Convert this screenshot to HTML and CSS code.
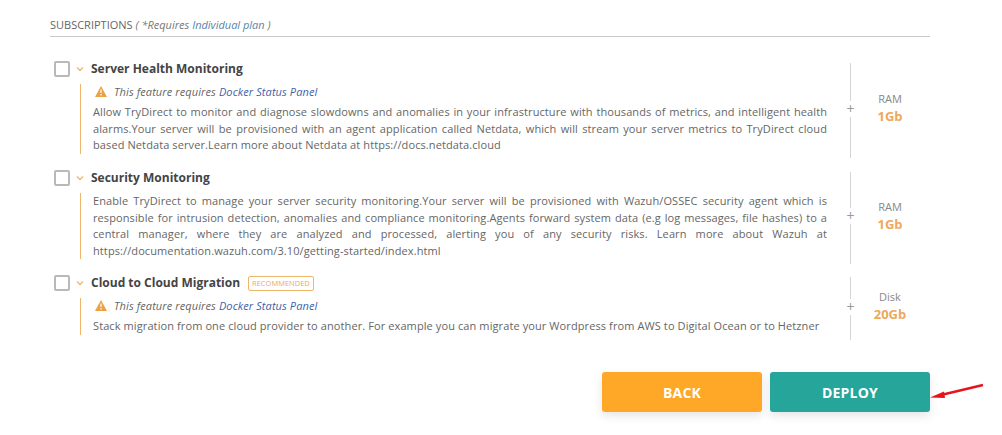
FILE: index.html
```html
<!DOCTYPE html>
<html lang="en">
<head>
<meta charset="utf-8">
<title>Subscriptions</title>
<link rel="stylesheet" href="styles.css">
</head>
<body>
<main class="page">
  <h2 class="section-head">SUBSCRIPTIONS <em>( *Requires <a href="#">Individual plan</a> )</em></h2>

  <section class="item item-1">
    <div class="main">
      <div class="title-row">
        <span class="check"></span>
        <svg class="chev" width="8" height="6" viewBox="0 0 8 6"><path d="M1 1.5 4 4.500 7 1.500" fill="none" stroke="#eeb66c" stroke-width="1.3"/></svg>
        <h3>Server Health Monitoring</h3>
      </div>
      <div class="body">
        <p class="warn"><svg width="12" height="11" viewBox="0 0 12 11"><path d="M6 0 12 11H0Z" fill="#eda145"/><path d="M6 3.6V7M6 8V9.4" stroke="#fff" stroke-width="1.2"/></svg><em>This feature requires <a href="#">Docker Status Panel</a></em></p>
        <p class="desc">Allow TryDirect to monitor and diagnose slowdowns and anomalies in your infrastructure with thousands of metrics, and intelligent health alarms.Your server will be provisioned with an agent application called Netdata, which will stream your server metrics to TryDirect cloud based Netdata server.Learn more about Netdata at https://docs.netdata.cloud</p>
      </div>
    </div>
    <aside class="side"><span class="plus">+</span><div class="res"><span>RAM</span><strong>1Gb</strong></div></aside>
  </section>

  <section class="item item-2">
    <div class="main">
      <div class="title-row">
        <span class="check"></span>
        <svg class="chev" width="8" height="6" viewBox="0 0 8 6"><path d="M1 1.5 4 4.500 7 1.500" fill="none" stroke="#eeb66c" stroke-width="1.3"/></svg>
        <h3>Security Monitoring</h3>
      </div>
      <div class="body">
        <p class="desc">Enable TryDirect to manage your server security monitoring.Your server will be provisioned with Wazuh/OSSEC security agent which is responsible for intrusion detection, anomalies and compliance monitoring.Agents forward system data (e.g log messages, file hashes) to a central manager, where they are analyzed and processed, alerting you of any security risks. Learn more about Wazuh at https://documentation.wazuh.com/3.10/getting-started/index.html</p>
      </div>
    </div>
    <aside class="side"><span class="plus">+</span><div class="res"><span>RAM</span><strong>1Gb</strong></div></aside>
  </section>

  <section class="item item-3">
    <div class="main">
      <div class="title-row">
        <span class="check"></span>
        <svg class="chev" width="8" height="6" viewBox="0 0 8 6"><path d="M1 1.5 4 4.500 7 1.500" fill="none" stroke="#eeb66c" stroke-width="1.3"/></svg>
        <h3>Cloud to Cloud Migration</h3>
        <span class="badge">RECOMMENDED</span>
      </div>
      <div class="body">
        <p class="warn"><svg width="12" height="11" viewBox="0 0 12 11"><path d="M6 0 12 11H0Z" fill="#eda145"/><path d="M6 3.6V7M6 8V9.4" stroke="#fff" stroke-width="1.2"/></svg><em>This feature requires <a href="#">Docker Status Panel</a></em></p>
        <p class="desc">Stack migration from one cloud provider to another. For example you can migrate your Wordpress from AWS to Digital Ocean or to Hetzner</p>
      </div>
    </div>
    <aside class="side"><span class="plus">+</span><div class="res"><span>Disk</span><strong>20Gb</strong></div></aside>
  </section>

  <div class="actions">
    <button class="btn back" type="button">BACK</button>
    <button class="btn deploy" type="button">DEPLOY
      <svg class="arrow" width="54" height="24" viewBox="0 0 54 24"><path d="M53 3 11 13" stroke="#e8141c" stroke-width="2.4" fill="none"/><path d="M0 15.500 14 9.500 15 16Z" fill="#e8141c"/></svg>
    </button>
  </div>
</main>
</body>
</html>
```
FILE: styles.css
```css
* { box-sizing: border-box; }
html, body { margin: 0; background: #fff; }
body { font-family: "Open Sans", sans-serif; color: #666; height: 435px; overflow: hidden; }
.page { width: 880px; margin-left: 50px; padding-top: 18px; }
a { color: #3f5fa8; text-decoration: none; }
.section-head { margin: 0 0 24px; height: 19px; border-bottom: 1px solid #c9c9c9; font-size: 11px; font-weight: 400; line-height: 13px; color: #666; }
.section-head em { color: #777; }
.section-head a { color: #5a83a8; }
.item { display: flex; width: 880px; }
.item-1 { height: 97px; margin-bottom: 12px; }
.item-2 { height: 94px; margin-bottom: 11px; }
.item-3 { height: 65px; }
.main { width: 781px; padding-left: 4px; }
.title-row { display: flex; align-items: center; height: 16px; }
.check { width: 16px; height: 16px; border: 2px solid #b9b9b9; border-radius: 2px; background: #fff; flex: none; }
.chev { margin-left: 6px; flex: none; }
h3 { margin: 0 0 0 7px; font-size: 12px; font-weight: 700; color: #444; line-height: 16px; white-space: nowrap; }
.badge { margin-left: 8px; height: 15px; padding: 0 3px; border: 1px solid #eeb66c; border-radius: 2px; font-size: 7.5px; line-height: 13px; color: #eda95a; font-weight: 400; white-space: nowrap; }
.body { margin: 7px 0 0 26px; border-left: 1px solid #eeb66c; padding-left: 12px; width: 747px; }
.warn { display: flex; align-items: center; gap: 7px; margin: 0 0 5px 2px; height: 15px; font-size: 11px; letter-spacing: .1px; color: #666; }
.warn a { color: #3f5fa8; }
.desc { margin: 0 0 -3px; font-size: 11px; line-height: 16.6px; letter-spacing: .1px; text-align: justify; color: #666; }
.side { position: relative; margin: 2px 0 0 19px; width: 80px; border-left: 1px solid #d4d4d4; display: flex; align-items: center; }
.plus { position: absolute; left: -5px; top: 50%; transform: translateY(-50%); margin-top: -2px; background: #fff; font-size: 14px; font-weight: 400; line-height: 16px; color: #999; width: 9px; text-align: center; }
.res { width: 78px; display: flex; flex-direction: column; align-items: center; padding-bottom: 3px; }
.res span { font-size: 11px; line-height: 14px; color: #888; }
.res strong { font-size: 13px; line-height: 20px; color: #eda95a; font-weight: 700; }
.actions { display: flex; justify-content: flex-end; gap: 8px; margin-top: 32px; }
.btn { position: relative; width: 160px; height: 40px; border: 0; border-radius: 3px; font: 700 14px "Open Sans", sans-serif; color: #fff; box-shadow: 0 4px 10px rgba(0,0,0,.1); letter-spacing: .2px; }
.back { background: #ffa726; }
.deploy { background: #26a69a; }
.arrow { position: absolute; left: 160px; top: 10px; }
```
